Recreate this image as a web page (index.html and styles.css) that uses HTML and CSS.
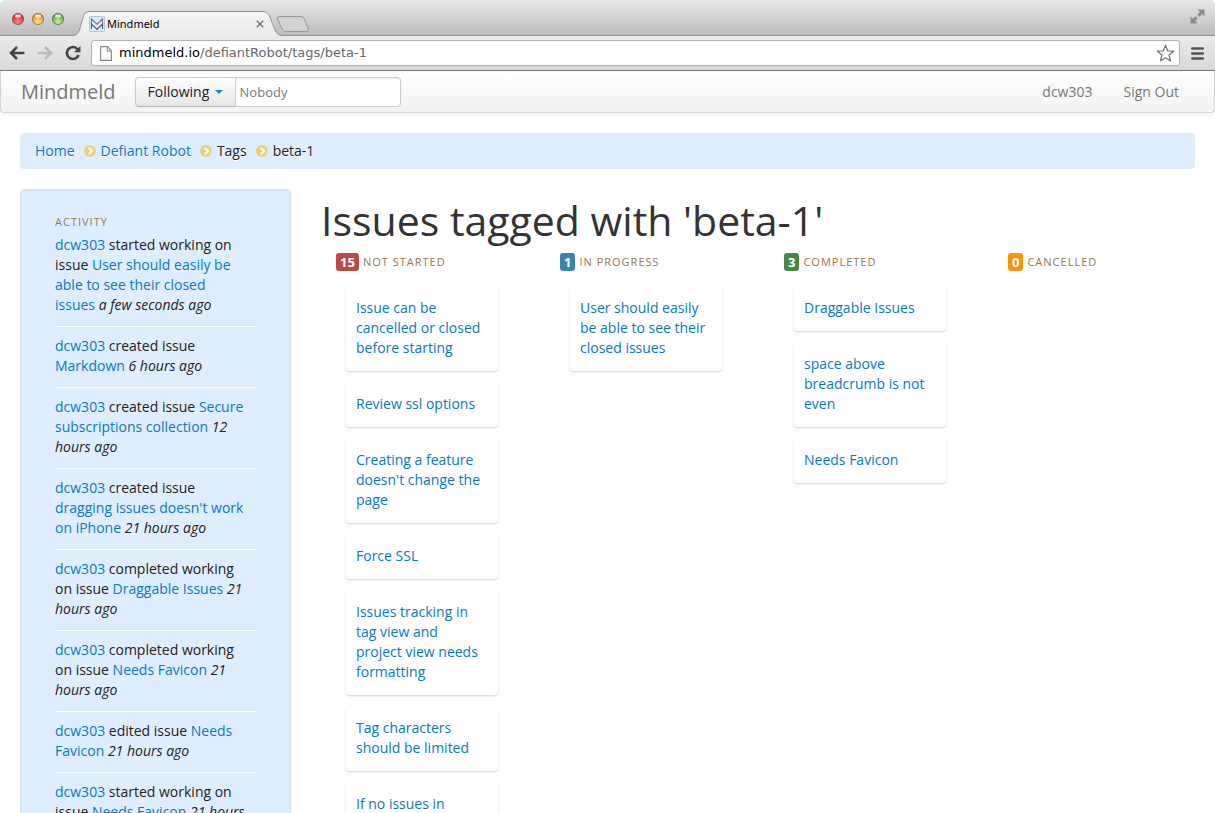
FILE: index.html
```html
<!DOCTYPE html>
<html lang="en">
<head>
<meta charset="utf-8">
<title>Mindmeld</title>
<link rel="stylesheet" href="styles.css">
</head>
<body>
<svg class="defs" aria-hidden="true">
  <symbol id="chevron" viewBox="0 0 12 12">
    <circle cx="6" cy="6" r="6" fill="#e9d27f"/>
    <path d="M4.800 2.900 8 6 4.800 9.100" fill="none" stroke="#fff" stroke-width="2"/>
  </symbol>
</svg>

<div class="tabstrip">
  <svg class="lights" width="52" height="14" viewBox="0 0 52 14" aria-hidden="true">
    <defs>
      <radialGradient id="red" cx=".5" cy=".75" r=".7"><stop offset="0" stop-color="#ff8d85"/><stop offset=".6" stop-color="#e8434a"/><stop offset="1" stop-color="#a82c30"/></radialGradient>
      <radialGradient id="amber" cx=".5" cy=".75" r=".7"><stop offset="0" stop-color="#ffe48f"/><stop offset=".6" stop-color="#f3ae45"/><stop offset="1" stop-color="#b06f22"/></radialGradient>
      <radialGradient id="green" cx=".5" cy=".75" r=".7"><stop offset="0" stop-color="#ccf3a0"/><stop offset=".6" stop-color="#80c35a"/><stop offset="1" stop-color="#43802f"/></radialGradient>
    </defs>
    <circle cx="6" cy="7" r="5.600" fill="url(#red)" stroke="#8f4747" stroke-width=".8"/>
    <circle cx="26" cy="7" r="5.600" fill="url(#amber)" stroke="#94703f" stroke-width=".8"/>
    <circle cx="46" cy="7" r="5.600" fill="url(#green)" stroke="#56794a" stroke-width=".8"/>
    <g fill="#fff" opacity=".75"><ellipse cx="6" cy="4" rx="3" ry="1.700"/><ellipse cx="26" cy="4" rx="3" ry="1.700"/><ellipse cx="46" cy="4" rx="3" ry="1.700"/></g>
  </svg>
  <div class="tab">
    <svg class="tab-shape" width="208" height="25" viewBox="0 0 208 25" aria-hidden="true">
      <defs><linearGradient id="tabfill" x1="0" y1="0" x2="0" y2="1"><stop offset="0" stop-color="#f5f5f5"/><stop offset="1" stop-color="#ebebeb"/></linearGradient></defs>
      <path d="M0 24.500C3 24 4 22 5.500 19L9.500 4.500Q11 .5 15 .5H190Q193.500.5 195 4L201 19Q203 24 207.500 24.500V25H0Z" fill="url(#tabfill)"/>
      <path d="M0 24.500C3 24 4 22 5.500 19L9.500 4.500Q11 .5 15 .5H190Q193.500.5 195 4L201 19Q203 24 207.500 24.500" fill="none" stroke="#929292"/>
    </svg>
    <svg width="16" height="16" viewBox="0 0 16 16" aria-hidden="true">
      <rect x=".5" y=".5" width="15" height="15" rx="1" fill="#dcecfc" stroke="#a5c9ea"/>
      <path d="M2.500 9V2.800L8 8.200l5.500-5.400V9" fill="none" stroke="#8a7a5a" stroke-width="1.100"/>
      <path d="M2.500 13V8.200L8 13.200l5.500-5V13" fill="none" stroke="#3f5d7c" stroke-width="1.100"/>
    </svg>
    <span class="tab-title">Mindmeld</span>
    <button class="plain" aria-label="Close tab"><svg width="8" height="8" viewBox="0 0 8 8"><path d="m.8.8 6.400 6.400M7.200.8.8 7.200" stroke="#777" stroke-width="1.500"/></svg></button>
  </div>
  <button class="plain newtab" aria-label="New tab"><svg width="34" height="18" viewBox="0 0 34 18"><path d="M3 1.500H25Q27.500 1.500 28.500 4L32 13.500Q32.800 16.500 30.500 16.500H10Q7 16.500 6 14L1.500 4Q.8 1.500 3 1.500Z" fill="#d2d2d2" stroke="#999"/></svg></button>
  <button class="plain expand" aria-label="Full screen"><svg width="15" height="15" viewBox="0 0 15 15"><path d="M7.500.5h7v7l-2.300-2.300-2.700 2.600-2.200-2.200L10 3ZM.5 7.500 2.800 9.800 5.300 7.300l2.300 2.300L5 12l2.500 2.500h-7Z" fill="#8b8b8b"/></svg></button>
</div>

<div class="toolbar">
  <button class="plain" aria-label="Back"><svg width="16" height="14" viewBox="0 0 16 14"><path d="M8 1 2 7l6 6M2.500 7H15.500" fill="none" stroke="#444" stroke-width="2.600"/></svg></button>
  <button class="plain" aria-label="Forward"><svg width="16" height="14" viewBox="0 0 16 14"><path d="m8 1 6 6-6 6M13.500 7H.5" fill="none" stroke="#b9b9b9" stroke-width="2.600"/></svg></button>
  <button class="plain" aria-label="Reload"><svg width="16" height="16" viewBox="0 0 16 16"><path d="M12.600 4.200A6 6 0 1 0 13.600 10" fill="none" stroke="#444" stroke-width="2.600"/><path d="M15.500.8v6.400H9Z" fill="#444"/></svg></button>
  <div class="address">
    <svg width="12" height="15" viewBox="0 0 12 15" aria-hidden="true"><path d="M.6.6H7.500l3.900 4V14.400H.6ZM7.300.8V5h4" fill="#fafafa" stroke="#888" stroke-width="1.100"/></svg>
    <div class="url"><label for="url">mindmeld.io</label><input id="url" type="text" value="/defiantRobot/tags/beta-1"></div>
    <button class="plain" aria-label="Bookmark"><svg width="19" height="19" viewBox="0 0 19 19"><path d="m9.500 1.200 2.200 5.600 6 .4-4.600 3.900 1.500 5.900-5.100-3.300L4.400 17l1.500-5.900L1.300 7.200l6-.4Z" fill="#fff" stroke="#777" stroke-width="1.300" stroke-linejoin="round"/></svg></button>
  </div>
  <button class="plain" aria-label="Menu"><svg width="13" height="13" viewBox="0 0 13 13"><path d="M1.200 1.500h10.600M1.200 6.500h10.600M1.200 11.500h10.600" stroke="#555" stroke-width="2.600" stroke-linecap="round"/></svg></button>
</div>

<div class="page">
  <nav class="navbar">
    <a class="brand" href="#">Mindmeld</a>
    <div class="follow">
      <button class="follow-button">Following <span class="caret"></span></button>
      <input class="follow-input" type="text" aria-label="Following" placeholder="Nobody">
    </div>
    <div class="account"><a href="#">dcw303</a><a href="#">Sign Out</a></div>
  </nav>

  <div class="content">
    <ol class="breadcrumb">
      <li><a href="#">Home</a></li>
      <li><svg class="sep" aria-hidden="true"><use href="#chevron"/></svg><a href="#">Defiant Robot</a></li>
      <li><svg class="sep" aria-hidden="true"><use href="#chevron"/></svg>Tags</li>
      <li><svg class="sep" aria-hidden="true"><use href="#chevron"/></svg>beta-1</li>
    </ol>

    <div class="columns">
      <aside class="sidebar">
        <h2 class="label">Activity</h2>
        <ul class="activity">
          <li><a href="#">dcw303</a> started working on issue <a href="#">User should easily be able to see their closed issues</a> <em>a few seconds ago</em></li>
          <li><a href="#">dcw303</a> created issue <a href="#">Markdown</a> <em>6 hours ago</em></li>
          <li><a href="#">dcw303</a> created issue <a href="#">Secure subscriptions collection</a> <em>12 hours ago</em></li>
          <li><a href="#">dcw303</a> created issue <a href="#">dragging issues doesn't work on iPhone</a> <em>21 hours ago</em></li>
          <li><a href="#">dcw303</a> completed working on issue <a href="#">Draggable Issues</a> <em>21 hours ago</em></li>
          <li><a href="#">dcw303</a> completed working on issue <a href="#">Needs Favicon</a> <em>21 hours ago</em></li>
          <li><a href="#">dcw303</a> edited issue <a href="#">Needs Favicon</a> <em>21 hours ago</em></li>
          <li><a href="#">dcw303</a> started working on issue <a href="#">Needs Favicon</a> <em>21 hours ago</em></li>
        </ul>
      </aside>

      <main class="main">
        <h1>Issues tagged with 'beta-1'</h1>
        <div class="board">
          <section>
            <h2 class="label"><span class="badge red">15</span>Not started</h2>
            <ul class="cards">
              <li><a href="#">Issue can be cancelled or closed before starting</a></li>
              <li><a href="#">Review ssl options</a></li>
              <li><a href="#">Creating a feature doesn't change the page</a></li>
              <li><a href="#">Force SSL</a></li>
              <li><a href="#">Issues tracking in tag view and project view needs formatting</a></li>
              <li><a href="#">Tag characters should be limited</a></li>
              <li><a href="#">If no issues in</a></li>
            </ul>
          </section>
          <section>
            <h2 class="label"><span class="badge blue">1</span>In progress</h2>
            <ul class="cards">
              <li><a href="#">User should easily be able to see their closed issues</a></li>
            </ul>
          </section>
          <section>
            <h2 class="label"><span class="badge green">3</span>Completed</h2>
            <ul class="cards">
              <li><a href="#">Draggable Issues</a></li>
              <li><a href="#">space above breadcrumb is not even</a></li>
              <li><a href="#">Needs Favicon</a></li>
            </ul>
          </section>
          <section>
            <h2 class="label"><span class="badge orange">0</span>Cancelled</h2>
          </section>
        </div>
      </main>
    </div>
  </div>
</div>
</body>
</html>
```
FILE: styles.css
```css
* { box-sizing: border-box; }
body {
  margin: 0;
  height: 100vh;
  overflow: hidden;
  display: flex;
  flex-direction: column;
  font: 14px/20px "Open Sans", sans-serif;
  color: #222;
  background: #fff;
}
a { color: #0877c4; text-decoration: none; }
ul, ol { list-style: none; margin: 0; padding: 0; }
h1, h2 { margin: 0; }
svg { display: block; flex: none; }
.defs { position: absolute; width: 0; height: 0; }
.plain { display: block; padding: 0; border: 0; background: none; flex: none; }

.tabstrip {
  flex: none;
  height: 36px;
  padding: 0 10px 0 12px;
  display: flex;
  align-items: flex-end;
  background: linear-gradient(#e8e8e8, #bcbcbc);
  border-bottom: 1px solid #929292;
  border-radius: 5px 5px 0 0;
}
.lights { margin-bottom: 9px; }
.tab {
  position: relative;
  width: 208px;
  height: 25px;
  margin: 0 0 -1px 10px;
  padding: 0 18px 0 15px;
  display: flex;
  align-items: center;
  gap: 2px;
}
.tab > * { position: relative; }
.tab .tab-shape { position: absolute; left: 0; bottom: 0; }
.tab-title { flex: 1; font: 11px/16px "Noto Sans", sans-serif; color: #000; }
.newtab { margin: 0 auto 2px -6px; position: relative; }
.expand { margin-bottom: 11px; }

.toolbar {
  flex: none;
  height: 35px;
  padding: 0 11px 0 9px;
  display: flex;
  align-items: center;
  gap: 12px;
  background: linear-gradient(#ebebeb, #d9d9d9);
  border-bottom: 1px solid #777;
}
.address {
  flex: 1;
  height: 26px;
  margin: 0 -1px 0 -2px;
  padding: 0 4px 0 8px;
  display: flex;
  align-items: center;
  background: #fff;
  border: 1px solid #b0b0b0;
  border-radius: 3px;
}
.url { flex: 1; display: flex; margin-left: 7px; font: 13px/18px "DejaVu Sans", sans-serif; color: #000; }
.url input { flex: 1; min-width: 0; padding: 0; border: 0; outline: 0; background: none; font: inherit; color: #666; }

.page { flex: 1; min-height: 0; overflow: hidden; }
.navbar {
  height: 42px;
  padding: 0 35px 0 20px;
  display: flex;
  align-items: center;
  background: linear-gradient(#fff, #f2f2f2);
  border: 1px solid #d4d4d4;
  border-top: 0;
  border-radius: 0 0 4px 4px;
  box-shadow: 0 1px 4px rgba(0, 0, 0, .07);
}
.brand { font-size: 20px; color: #777; margin-right: 19px; }
.follow { display: flex; height: 30px; }
.follow-button {
  width: 101px;
  padding: 0 12px;
  display: flex;
  align-items: center;
  justify-content: space-between;
  font: inherit;
  color: #222;
  background: linear-gradient(#fff, #e6e6e6);
  border: 1px solid #ccc;
  border-bottom-color: #b3b3b3;
  border-radius: 4px 0 0 4px;
}
.caret { border: 4px solid transparent; border-top-color: #0b8bd8; border-bottom: 0; }
.follow-input {
  width: 165px;
  padding: 0 4px;
  font: 13px/20px "Open Sans", sans-serif;
  border: 1px solid #ccc;
  border-left: 0;
  border-radius: 0 4px 4px 0;
  box-shadow: inset 0 1px 1px rgba(0, 0, 0, .075);
}
.follow-input::placeholder { color: #777; }
.account { margin-left: auto; display: flex; gap: 31px; }
.account a { color: #777; }

.content { padding: 20px; }
.breadcrumb {
  display: flex;
  gap: 9px;
  height: 36px;
  padding: 8px 15px;
  margin-bottom: 20px;
  background: #deeeff;
  border-radius: 4px;
  text-shadow: 0 1px 0 #fff;
}
.breadcrumb li { display: flex; align-items: center; gap: 5px; }
.sep { width: 12px; height: 12px; }

.columns { display: flex; gap: 30px; align-items: flex-start; }
.sidebar {
  flex: 0 0 271px;
  padding: 22px 34px;
  background: #deeeff;
  border: 1px solid #dcdfe3;
  border-radius: 4px;
  box-shadow: inset 0 1px 1px rgba(0, 0, 0, .05);
}
.label {
  display: flex;
  align-items: center;
  font-size: 11px;
  line-height: 20px;
  font-weight: 400;
  letter-spacing: 1px;
  text-transform: uppercase;
  color: #93794b;
}
.sidebar .label { margin-bottom: 3px; }
.activity li { margin-bottom: 9px; padding-right: 7px; }
.activity li:not(:last-child)::after {
  content: "";
  display: block;
  margin: 10px -7px 0 1px;
  border-top: 1px solid #e5e5e5;
  border-bottom: 1px solid #fff;
}

.main { flex: 1; min-width: 0; }
h1 { padding-top: 11px; font-size: 41px; line-height: 40px; font-weight: 400; color: #333; }
.board { padding: 13px 15px 0; display: grid; grid-template-columns: repeat(4, 1fr); gap: 52px; }
.board .label { white-space: nowrap; line-height: 18px; gap: 4px; }
.badge { padding: 0 4px; border-radius: 3px; font-size: 13px; font-weight: 700; letter-spacing: 0; color: #fff; }
.red { background: #b94a48; }
.blue { background: #3a87ad; }
.green { background: #468847; }
.orange { background: #f89406; }
.cards { padding: 16px 10px; display: flex; flex-direction: column; gap: 12px; }
.cards li {
  padding: 11px 12px 13px 10px;
  border-radius: 4px;
  box-shadow: 0 1px 2px rgba(0, 0, 0, .18);
}
```
